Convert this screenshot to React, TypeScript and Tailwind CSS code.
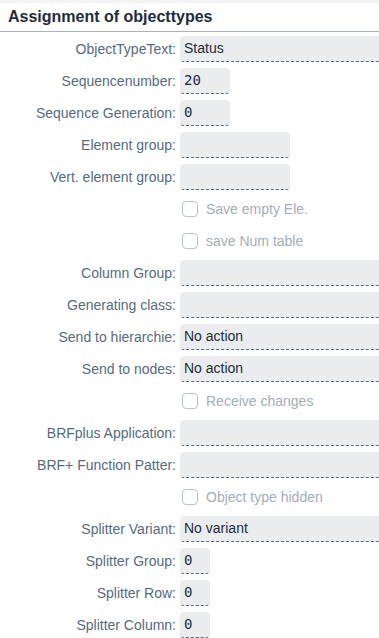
import React from "react";

type Row =
  | { kind: "field"; label: string; value?: string; width: "full" | 50 | 110 | 30; mono?: boolean }
  | { kind: "check"; label: string };

const rows: Row[] = [
  { kind: "field", label: "ObjectTypeText:", value: "Status", width: "full" },
  { kind: "field", label: "Sequencenumber:", value: "20", width: 50, mono: true },
  { kind: "field", label: "Sequence Generation:", value: "0", width: 50, mono: true },
  { kind: "field", label: "Element group:", width: 110 },
  { kind: "field", label: "Vert. element group:", width: 110 },
  { kind: "check", label: "Save empty Ele." },
  { kind: "check", label: "save Num table" },
  { kind: "field", label: "Column Group:", width: "full" },
  { kind: "field", label: "Generating class:", width: "full" },
  { kind: "field", label: "Send to hierarchie:", value: "No action", width: "full" },
  { kind: "field", label: "Send to nodes:", value: "No action", width: "full" },
  { kind: "check", label: "Receive changes" },
  { kind: "field", label: "BRFplus Application:", width: "full" },
  { kind: "field", label: "BRF+ Function Patter:", width: "full" },
  { kind: "check", label: "Object type hidden" },
  { kind: "field", label: "Splitter Variant:", value: "No variant", width: "full" },
  { kind: "field", label: "Splitter Group:", value: "0", width: 30, mono: true },
  { kind: "field", label: "Splitter Row:", value: "0", width: 30, mono: true },
  { kind: "field", label: "Splitter Column:", value: "0", width: 30, mono: true },
];

function Field({ r }: { r: Extract<Row, { kind: "field" }> }) {
  const w =
    r.width === "full"
      ? "w-[220px]"
      : r.width === 50
      ? "w-[50px]"
      : r.width === 110
      ? "w-[110px]"
      : "w-[30px]";
  return (
    <div
      className={`${w} h-[26px] shrink-0 rounded-[4px] bg-[#eaecee] border-b border-dashed border-[#556b82] flex items-center px-[4px] text-[14px] text-[#1d2d3e] ${
        r.mono ? "font-['DejaVu_Sans_Mono',monospace] text-[13px]" : ""
      }`}
    >
      {r.value}
    </div>
  );
}

export default function App() {
  return (
    <div className="w-[379px] h-[638px] overflow-hidden bg-white font-['Liberation_Sans',Arial,sans-serif]">
      <div className="h-[3px] bg-[#f2f3f4]" />
      <div className="h-[29px] flex items-center px-[8px] border-b border-[#a9b4be]">
        <span className="text-[16px] font-bold text-[#1d2d3e]">Assignment of objecttypes</span>
      </div>
      <div className="pt-[1px] flex flex-col">
        {rows.map((r, i) => (
          <div key={i} className="h-[32px] flex items-center">
            <div className="w-[176px] shrink-0 text-right text-[14px] text-[#556b82] whitespace-nowrap">
              {r.kind === "field" ? r.label : ""}
            </div>
            <div className="ml-[4px] flex items-center">
              {r.kind === "field" ? (
                <Field r={r} />
              ) : (
                <div className="flex items-center">
                  <div className="ml-[2px] w-[16px] h-[16px] rounded-[4px] border border-[#b9c2cb] bg-white" />
                  <span className="ml-[8px] text-[14px] text-[#a5adb6]">{r.label}</span>
                </div>
              )}
            </div>
          </div>
        ))}
      </div>
    </div>
  );
}
